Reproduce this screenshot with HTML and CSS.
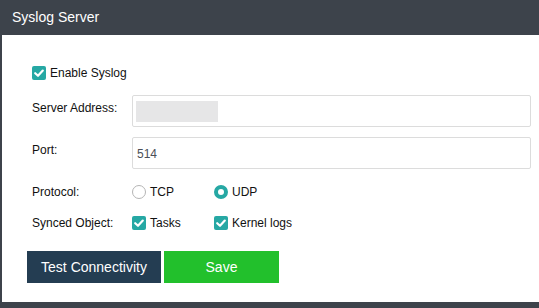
FILE: index.html
```html
<!DOCTYPE html>
<html>
<head>
<meta charset="utf-8">
<link rel="stylesheet" href="styles.css">
</head>
<body>
<div class="dialog">
  <div class="header">Syslog Server</div>
  <div class="panel">
    <label class="check-row">
      <span class="cbox"><svg viewBox="0 0 14 14" width="14" height="14"><path d="M3.2 7.2 L6 9.8 L10.8 4.6" fill="none" stroke="#fff" stroke-width="2.2" stroke-linecap="round" stroke-linejoin="round"/></svg></span>
      <span class="opt-text">Enable Syslog</span>
    </label>
    <div class="field field-first">
      <div class="label">Server Address:</div>
      <div class="input"><span class="redacted"></span></div>
    </div>
    <div class="field">
      <div class="label">Port:</div>
      <div class="input"><span class="value">514</span></div>
    </div>
    <div class="opt-row opt-protocol">
      <div class="label">Protocol:</div>
      <div class="opts">
        <div class="opt"><span class="radio"></span><span class="opt-text">TCP</span></div>
        <div class="opt"><span class="radio on"></span><span class="opt-text">UDP</span></div>
      </div>
    </div>
    <div class="opt-row opt-synced">
      <div class="label">Synced Object:</div>
      <div class="opts">
        <div class="opt"><span class="cbox"><svg viewBox="0 0 14 14" width="14" height="14"><path d="M3.2 7.2 L6 9.8 L10.8 4.6" fill="none" stroke="#fff" stroke-width="2.2" stroke-linecap="round" stroke-linejoin="round"/></svg></span><span class="opt-text">Tasks</span></div>
        <div class="opt"><span class="cbox"><svg viewBox="0 0 14 14" width="14" height="14"><path d="M3.2 7.2 L6 9.8 L10.8 4.6" fill="none" stroke="#fff" stroke-width="2.2" stroke-linecap="round" stroke-linejoin="round"/></svg></span><span class="opt-text">Kernel logs</span></div>
      </div>
    </div>
    <div class="buttons">
      <button class="btn btn-dark">Test Connectivity</button>
      <button class="btn btn-green">Save</button>
    </div>
  </div>
</div>
</body>
</html>
```
FILE: styles.css
```css
html, body {
  margin: 0;
  padding: 0;
  background: #3d434b;
  font-family: "Liberation Sans", Arial, sans-serif;
  width: 539px;
  height: 308px;
  overflow: hidden;
}
.dialog {
  display: flex;
  flex-direction: column;
}
.header {
  height: 35px;
  box-sizing: border-box;
  padding: 8px 0 0 12px;
  color: #ffffff;
  font-size: 14px;
  line-height: 18px;
}
.panel {
  margin-left: 2px;
  background: #ffffff;
  height: 267px;
  box-sizing: border-box;
  padding: 31px 8px 0 30px;
  display: flex;
  flex-direction: column;
  color: #111;
  font-size: 12px;
}
.check-row {
  display: flex;
  align-items: center;
  height: 14px;
}
.cbox {
  width: 14px;
  height: 14px;
  border-radius: 2px;
  background: #26a8a4;
  display: inline-block;
  flex: none;
}
.cbox svg { display: block; }
.opt-text {
  margin-left: 4px;
  line-height: 14px;
}
.field {
  display: grid;
  grid-template-columns: 100px 399px;
  margin-top: 10px;
}
.field-first { margin-top: 15px; }
.label {
  line-height: 14px;
}
.field .label {
  padding-top: 6px;
}
.input {
  height: 32px;
  box-sizing: border-box;
  border: 1px solid #dcdcdc;
  border-radius: 2px;
  padding: 5px 0 0 3px;
}
.redacted {
  display: block;
  width: 82px;
  height: 21px;
  background: #e6e6e7;
}
.value {
  display: block;
  padding: 4px 0 0 1px;
  color: #4b4f57;
  line-height: 14px;
}
.opt-row {
  display: grid;
  grid-template-columns: 100px auto;
  align-items: center;
  height: 20px;
}
.opt-protocol { margin-top: 13px; }
.opt-synced { margin-top: 11px; }
.opts {
  display: flex;
}
.opt {
  width: 82px;
  display: flex;
  align-items: center;
}
.radio {
  width: 14px;
  height: 14px;
  box-sizing: border-box;
  border: 1px solid #b5b5b5;
  border-radius: 50%;
  flex: none;
}
.radio.on {
  border: 4px solid #26a8a4;
  background: #fff;
}
.buttons {
  display: flex;
  gap: 3px;
  margin: 18px 0 0 -5px;
}
.btn {
  height: 32px;
  border: none;
  color: #ffffff;
  font-family: "Liberation Sans", Arial, sans-serif;
  font-size: 14px;
  padding: 0;
  cursor: pointer;
}
.btn-dark {
  width: 134px;
  background: #243d52;
}
.btn-green {
  width: 115px;
  background: #22c02c;
}
```
